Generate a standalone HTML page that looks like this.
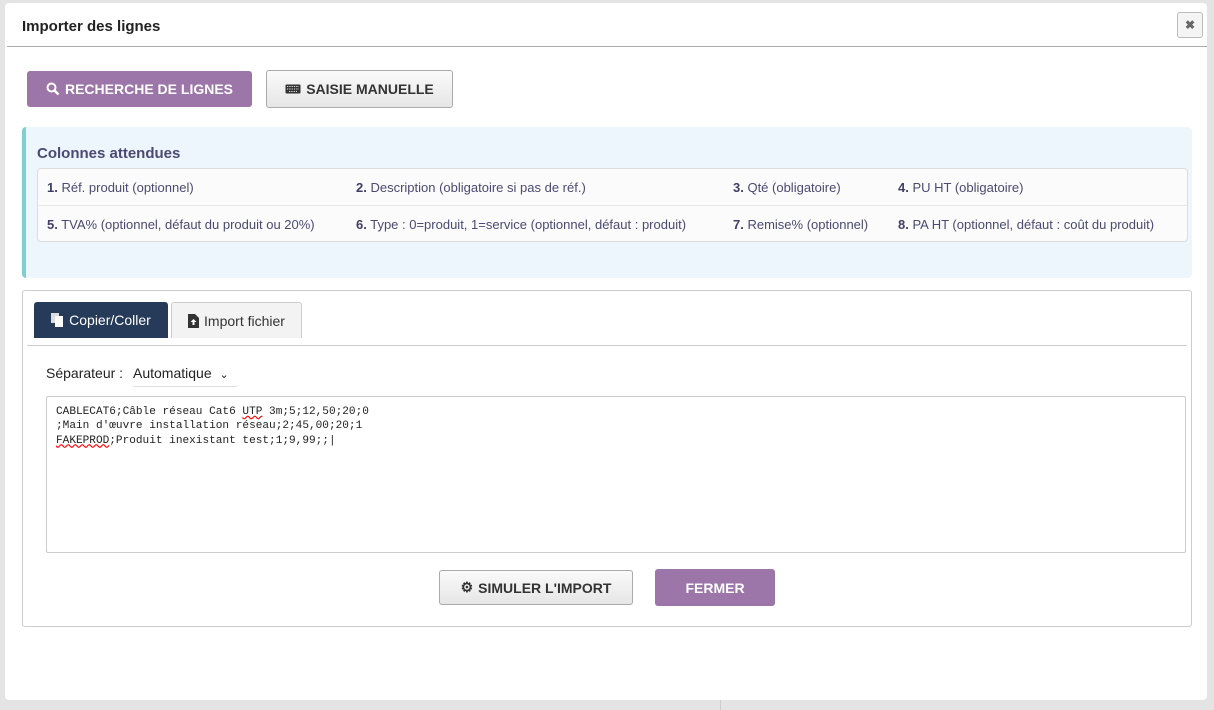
<!DOCTYPE html>
<html><head><meta charset="utf-8"><style>
*{box-sizing:border-box;margin:0;padding:0}
body{width:1214px;height:710px;background:#e4e4e4;font-family:"Liberation Sans",Arial,sans-serif;position:relative;overflow:hidden}
.a{position:absolute}
.modal{left:5px;top:3px;width:1202px;height:697px;background:#fff;border-radius:4px}
.btn{position:absolute;display:flex;align-items:center;justify-content:center;font-weight:bold;font-size:14px;border-radius:3px}
.pur{background:#9c76a8;color:#fff}
.gry{background:linear-gradient(#fafafa,#e6e6e6);border:1px solid #aaa;color:#333}
.cell{position:absolute;font-size:13px;color:#4a4a72}
.cell b{color:#3e3e66}
</style></head><body>
<div class="a modal"></div>
<div class="a" style="left:22px;top:18px;font-size:15px;font-weight:bold;color:#222">Importer des lignes</div>
<div class="a" style="left:7px;top:46px;width:1200px;height:1px;background:#aaa"></div>
<div class="a" style="left:1177px;top:12px;width:26px;height:26px;border:1px solid #bbb;border-radius:3px;background:#f4f4f4;color:#666;font-size:12px;font-weight:bold;text-align:center;line-height:24px">✖</div>

<div class="btn pur" style="left:27px;top:71px;width:225px;height:36px"><svg width="14" height="14" viewBox="0 0 14 14" style="margin-right:5px"><circle cx="5.5" cy="5.5" r="4" fill="none" stroke="#fff" stroke-width="2"/><path d="M8.5 8.5L12.5 12.5" stroke="#fff" stroke-width="2.5"/></svg>RECHERCHE DE LIGNES</div>
<div class="btn gry" style="left:266px;top:70px;width:187px;height:38px"><svg width="16" height="10" viewBox="0 0 16 10" style="margin-right:5px"><rect x="0.5" y="0.5" width="15" height="9" rx="1" fill="#333"/><path d="M2 2.5h12M2 5h12M4 7.5h8" stroke="#ddd" stroke-width="1" stroke-dasharray="1.3 1"/></svg>SAISIE MANUELLE</div>

<div class="a" style="left:22px;top:127px;width:1170px;height:151px;background:#eef6fd;border-left:4px solid #7fcfd0;border-radius:4px"></div>
<div class="a" style="left:37px;top:145px;font-size:15px;font-weight:bold;color:#4a4a72">Colonnes attendues</div>
<div class="a" style="left:37px;top:168px;width:1151px;height:74px;background:#fbfbfb;border:1px solid #ddd;border-radius:4px"></div>
<div class="a" style="left:38px;top:205px;width:1149px;height:1px;background:#e8e8e8"></div>
<div class="cell" style="left:47px;top:180px"><b>1.</b> Réf. produit (optionnel)</div>
<div class="cell" style="left:356px;top:180px"><b>2.</b> Description (obligatoire si pas de réf.)</div>
<div class="cell" style="left:733px;top:180px"><b>3.</b> Qté (obligatoire)</div>
<div class="cell" style="left:898px;top:180px"><b>4.</b> PU HT (obligatoire)</div>
<div class="cell" style="left:47px;top:217px"><b>5.</b> TVA% (optionnel, défaut du produit ou 20%)</div>
<div class="cell" style="left:356px;top:217px"><b>6.</b> Type : 0=produit, 1=service (optionnel, défaut : produit)</div>
<div class="cell" style="left:733px;top:217px"><b>7.</b> Remise% (optionnel)</div>
<div class="cell" style="left:898px;top:217px"><b>8.</b> PA HT (optionnel, défaut : coût du produit)</div>

<div class="a" style="left:22px;top:290px;width:1170px;height:337px;border:1px solid #ccc;border-radius:3px"></div>
<div class="a" style="left:27px;top:345px;width:1160px;height:1px;background:#ccc"></div>
<div class="btn" style="left:34px;top:302px;width:134px;height:36px;background:#263a5a;color:#fff;font-weight:normal;font-size:14px;border-radius:3px 3px 0 0"><svg width="13" height="14" viewBox="0 0 13 14" style="margin-right:5px"><rect x="0" y="0" width="8" height="10" fill="#ddd"/><rect x="4" y="3" width="8" height="11" fill="#fff"/></svg>Copier/Coller</div>
<div class="btn" style="left:171px;top:302px;width:131px;height:36px;background:#f3f3f3;border:1px solid #ccc;border-bottom:none;color:#333;font-weight:normal;font-size:14px;border-radius:3px 3px 0 0"><svg width="11" height="14" viewBox="0 0 11 14" style="margin-right:5px"><path d="M0 0h7l4 4v10H0z" fill="#333"/><path d="M5.5 5l-3 3h2v3h2V8h2z" fill="#fff"/></svg>Import fichier</div>

<div class="a" style="left:46px;top:365px;font-size:14px;color:#222">Séparateur :</div>
<div class="a" style="left:132px;top:359px;width:106px;height:28px;border-bottom:1px solid #ddd;border-radius:3px;font-size:14px;color:#222;padding:6px 0 0 1px">Automatique <span style="font-size:11px;margin-left:4px">⌄</span></div>

<div class="a" style="left:46px;top:396px;width:1140px;height:157px;border:1px solid #ccc;border-radius:2px;padding:8px 9px;font-family:'Liberation Mono',monospace;font-size:11.1px;line-height:14.3px;color:#222;white-space:pre">CABLECAT6;Câble réseau Cat6 <span style="text-decoration:underline wavy red">UTP</span> 3m;5;12,50;20;0
;Main d'œuvre installation réseau;2;45,00;20;1
<span style="text-decoration:underline wavy red">FAKEPROD</span>;Produit inexistant test;1;9,99;;|</div>

<div class="btn gry" style="left:439px;top:570px;width:194px;height:35px"><span style="margin-right:5px">⚙</span>SIMULER L'IMPORT</div>
<div class="btn pur" style="left:655px;top:569px;width:120px;height:37px">FERMER</div>
<div class="a" style="left:720px;top:700px;width:1px;height:10px;background:#ccc"></div>
</body></html>
